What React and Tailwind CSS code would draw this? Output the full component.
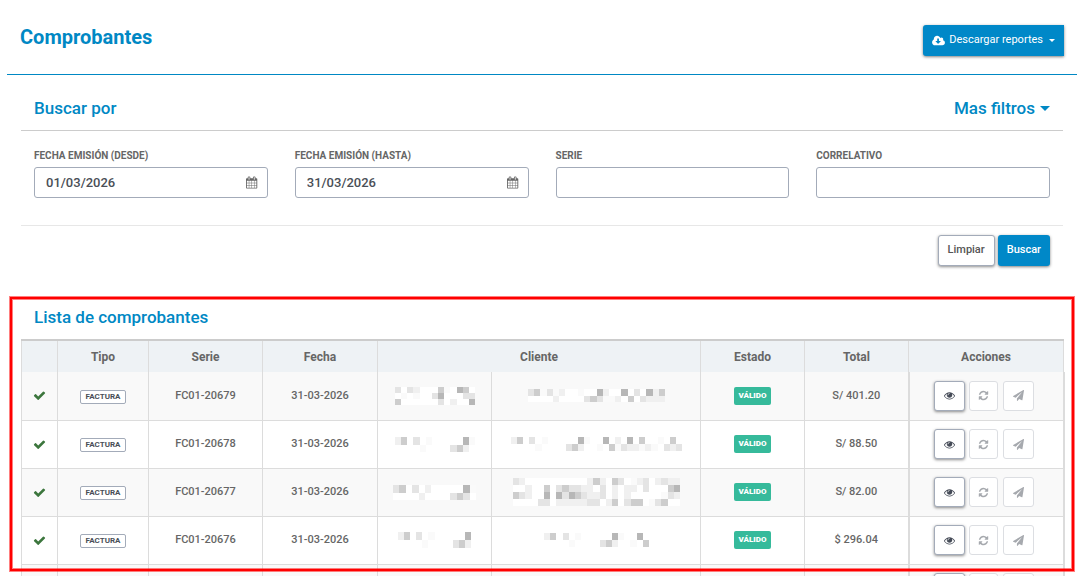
import React from 'react';

const iconPaths = {
  check:
    'M1671 566q0 40-28 68l-724 724-136 136q-28 28-68 28t-68-28l-136-136-362-362q-28-28-28-68t28-68l136-136q28-28 68-28t68 28l294 295 656-657q28-28 68-28t68 28l136 136q28 28 28 68z',
  eye: 'M1664 960q-152-236-381-353 61 104 61 225 0 185-131.5 316.5t-316.5 131.5-316.5-131.5-131.5-316.5q0-121 61-225-229 117-381 353 133 205 333.5 326.5t434.5 121.5 434.5-121.5 333.5-326.5zm-720-384q0-20-14-34t-34-14q-125 0-214.5 89.5t-89.5 214.5q0 20 14 34t34 14 34-14 14-34q0-86 61-147t147-61q20 0 34-14t14-34zm848 384q0 34-20 69-140 230-376.5 368.5t-499.5 138.5-499.5-139-376.5-368q-20-35-20-69t20-69q140-229 376.5-368t499.5-139 499.5 139 376.5 368q20 35 20 69z',
  refresh:
    'M1639 1056q0 5-1 7-64 268-268 434.5t-478 166.5q-146 0-282.5-55t-243.5-157l-129 129q-19 19-45 19t-45-19-19-45v-448q0-26 19-45t45-19h448q26 0 45 19t19 45-19 45l-137 137q71 66 161 102t187 36q134 0 250-65t186-179q11-17 53-117 8-23 30-23h192q13 0 22.5 9.5t9.5 22.5zm25-800v448q0 26-19 45t-45 19h-448q-26 0-45-19t-19-45 19-45l138-138q-148-137-349-137-134 0-250 65t-186 179q-11 17-53 117-8 23-30 23h-199q-13 0-22.5-9.5t-9.5-22.5v-7q65-268 270-434.5t480-166.5q146 0 284 55.5t245 156.5l130-129q19-19 45-19t45 19 19 45z',
  plane:
    'M1764 11q33 24 27 64l-256 1536q-5 29-32 45-14 8-31 8-11 0-24-5l-453-185-242 295q-18 23-49 23-13 0-22-4-19-7-30.5-23.5t-11.5-36.5v-349l864-1059-1069 925-395-162q-37-14-40-55-2-40 32-59l1664-960q15-9 32-9 20 0 36 11z',
  calendar:
    'M192 1664h288v-288h-288v288zm352 0h320v-288h-320v288zm-352-352h288v-320h-288v320zm352 0h320v-320h-320v320zm-352-384h288v-288h-288v288zm736 736h320v-288h-320v288zm-384-736h320v-288h-320v288zm768 736h288v-288h-288v288zm-384-352h320v-320h-320v320zm-352-864v-288q0-13-9.5-22.5t-22.5-9.5h-64q-13 0-22.5 9.5t-9.5 22.5v288q0 13 9.5 22.5t22.5 9.5h64q13 0 22.5-9.5t9.5-22.5zm736 864h288v-320h-288v320zm-384-384h320v-288h-320v288zm384 0h288v-288h-288v288zm32-480v-288q0-13-9.5-22.5t-22.5-9.5h-64q-13 0-22.5 9.5t-9.5 22.5v288q0 13 9.5 22.5t22.5 9.5h64q13 0 22.5-9.5t9.5-22.5zm384-64v1280q0 52-38 90t-90 38h-1408q-52 0-90-38t-38-90v-1280q0-52 38-90t90-38h128v-96q0-66 47-113t113-47h64q66 0 113 47t47 113v96h384v-96q0-66 47-113t113-47h64q66 0 113 47t47 113v96h128q52 0 90 38t38 90z',
  cloud:
    'M1216 928q0-14-9-23t-23-9h-224v-352q0-13-9.5-22.5t-22.5-9.5h-192q-13 0-22.5 9.5t-9.5 22.5v352h-224q-13 0-22.5 9.5t-9.5 22.5q0 14 9 23l352 352q9 9 23 9t23-9l351-351q10-12 10-24zm640 224q0 159-112.5 271.5t-271.5 112.5h-1088q-185 0-316.5-131.5t-131.5-316.5q0-130 70-240t188-165q-2-30-2-43 0-212 150-362t362-150q156 0 285.5 87t188.5 231q71-62 166-62 106 0 181 75t75 181q0 76-41 138 130 31 213.5 135.5t83.5 238.5z',
};

const viewBoxes = {
  cloud: '-64 0 1920 1792',
  calendar: '64 0 1920 1792',
};

const Icon = ({ name, className }) => (
  <svg viewBox={viewBoxes[name] || '0 0 1792 1792'} fill="currentColor" aria-hidden="true" className={className}>
    <path d={iconPaths[name]} />
  </svg>
);

const Caret = ({ className }) => (
  <svg viewBox="0 0 10 5" fill="currentColor" aria-hidden="true" className={className}>
    <path d="M0 0h10L5 5z" />
  </svg>
);

const shades = { w: '#ffffff', a: '#fafafa', b: '#f0f0f0', c: '#e4e4e4', d: '#cdcdcd', e: '#b7b7b7' };

// Pixelated block that hides client data, one letter per tile
const Mosaic = ({ width, height, rows }) => (
  <svg
    width={width}
    height={height}
    viewBox={`0 0 ${rows[0].length} ${rows.length}`}
    preserveAspectRatio="none"
    shapeRendering="crispEdges"
    aria-hidden="true"
    className="mx-auto block"
  >
    {rows.map((row, y) =>
      row.split('').map((tile, x) =>
        tile === '.' ? null : <rect key={`${x}-${y}`} x={x} y={y} width="1" height="1" fill={shades[tile]} />
      )
    )}
  </svg>
);

const comprobantes = [
  {
    serie: 'FC01-20679',
    fecha: '31-03-2026',
    total: 'S/ 401.20',
    documento: { width: 80, height: 18, rows: ['cwcbwwwdawedw', 'wawawwcewwwcc', 'dwwwwwwcwbwwe'] },
    nombre: { width: 137, height: 13, rows: ['cdacabwwawwebwwewcwebd', 'wwwwbwwwwcdcaabwdwcbbb'] },
  },
  {
    serie: 'FC01-20678',
    fecha: '31-03-2026',
    total: 'S/ 88.50',
    documento: { width: 80, height: 15, rows: ['bd.c.a.....ea', '....a....cdb.'] },
    nombre: {
      width: 171,
      height: 14,
      rows: ['bd.c.a.....ea..e.b.e.d..a.d.', '....a....cdb..a.dacbbaba.cbc'],
    },
  },
  {
    serie: 'FC01-20677',
    fecha: '31-03-2026',
    total: 'S/ 82.00',
    documento: { width: 83, height: 15, rows: ['cdwcwbwwwwwea', 'wwwwbwwwwcdcw'] },
    nombre: {
      width: 167,
      height: 28,
      rows: [
        'cbwwwwwwwwwwbdbwdcwabcwbcbb',
        'wwbwwdwcdccbbwcwbwbbwcwwwde',
        'dcbwwewecedcbbcwbwbwwwwwacb',
        'wwwwccwbbbbbccwbdwcddwacdww',
      ],
    },
  },
  {
    serie: 'FC01-20676',
    fecha: '31-03-2026',
    total: '$ 296.04',
    documento: { width: 73, height: 16, rows: ['bd.c.a.....e', '....a....cdb'] },
    nombre: { width: 105, height: 14, rows: ['bd.c.a.....ea..e.', '....a....cdb..a.d'] },
  },
];

const Field = ({ id, label, value, date }) => (
  <div>
    <label htmlFor={id} className="block text-[10px] leading-4 font-bold text-[#666666] uppercase">
      {label}
    </label>
    <div className="mt-[3px] flex h-[31px] items-center rounded-[3px] border border-[#a3abb9] bg-white pr-2">
      <input
        id={id}
        type="text"
        defaultValue={value}
        className="h-full w-full min-w-0 flex-1 bg-transparent pl-[11px] text-[13px] font-medium text-[#4a4f57] outline-none"
      />
      {date && (
        <button type="button" aria-label={`Abrir calendario: ${label}`} className="text-[#666666]">
          <Icon name="calendar" className="h-[13px] w-[13px]" />
        </button>
      )}
    </div>
  </div>
);

const Acciones = () => (
  <div className="flex items-center justify-center gap-1 pr-1">
    <button
      type="button"
      aria-label="Ver"
      className="flex h-[30px] w-[31px] items-center justify-center rounded-[3px] border border-[#a3abb9] bg-white text-[#454b57] shadow-[0_1px_3px_rgba(0,0,0,0.45)]"
    >
      <Icon name="eye" className="h-[11px] w-[11px]" />
    </button>
    <button
      type="button"
      aria-label="Actualizar"
      disabled
      className="flex h-[30px] w-[29px] items-center justify-center rounded-[3px] border border-[#dcdee2] bg-white text-[#a6a9ae]"
    >
      <Icon name="refresh" className="h-[11px] w-[11px]" />
    </button>
    <button
      type="button"
      aria-label="Enviar"
      disabled
      className="ml-px flex h-[30px] w-[31px] items-center justify-center rounded-[3px] border border-[#dcdee2] bg-white text-[#a6a9ae]"
    >
      <Icon name="plane" className="h-[11px] w-[11px]" />
    </button>
  </div>
);

const TablaComprobantes = () => (
  <table className="w-full table-fixed border-collapse text-center text-[11px] font-medium text-[#666666]">
    <colgroup>
      <col className="w-[36px]" />
      <col className="w-[91px]" />
      <col className="w-[114px]" />
      <col className="w-[115px]" />
      <col className="w-[114px]" />
      <col className="w-[209px]" />
      <col className="w-[104px]" />
      <col className="w-[104px]" />
      <col className="w-[155px]" />
    </colgroup>
    <thead>
      <tr className="h-8 border-t-2 border-[#cccccc] bg-[#eef2f5] text-xs [&>th]:border-x [&>th]:border-[#dcdcdc] [&>th]:p-0 [&>th]:font-bold">
        <th scope="col" aria-label="Verificado"></th>
        <th scope="col">Tipo</th>
        <th scope="col">Serie</th>
        <th scope="col">Fecha</th>
        <th scope="col" colSpan={2}>Cliente</th>
        <th scope="col">Estado</th>
        <th scope="col">Total</th>
        <th scope="col">Acciones</th>
      </tr>
    </thead>
    <tbody>
      {comprobantes.map((item) => (
        <tr
          key={item.serie}
          className="h-12 odd:bg-[#f9f9f9] [&>td]:border-x [&>td]:border-b [&>td]:border-[#dcdcdc] [&>td]:p-0 [&>td:last-child]:border-x-2"
        >
          <td>
            <Icon name="check" className="mx-auto h-[13px] w-[13px] text-[#3c763d]" />
          </td>
          <td>
            <span className="inline-block rounded-xs border border-[#a3abb9] bg-white px-[5px] text-[8px] leading-3 font-bold text-[#4a4f57]">
              FACTURA
            </span>
          </td>
          <td>{item.serie}</td>
          <td>{item.fecha}</td>
          <td>
            <Mosaic {...item.documento} />
          </td>
          <td>
            <Mosaic {...item.nombre} />
          </td>
          <td>
            <span className="inline-block rounded-xs bg-[#36ba9b] px-[5px] text-[8px] leading-[18px] font-black text-white">
              VÁLIDO
            </span>
          </td>
          <td>{item.total}</td>
          <td>
            <Acciones />
          </td>
        </tr>
      ))}
      <tr className="h-12 bg-[#f9f9f9] [&>td]:border-x [&>td]:border-[#dcdcdc] [&>td]:p-0 [&>td:last-child]:border-x-2">
        <td></td>
        <td></td>
        <td></td>
        <td></td>
        <td></td>
        <td></td>
        <td></td>
        <td></td>
        <td>
          <Acciones />
        </td>
      </tr>
    </tbody>
  </table>
);

const App = () => {
  return (
    <div className="h-screen overflow-hidden bg-white font-['Roboto',sans-serif]">
      <header className="mx-[7px] flex h-[75px] items-start justify-between border-b border-[#0088c4] px-[13px] pt-[25px]">
        <h1 className="text-xl leading-6 font-bold text-[#0088c4]">Comprobantes</h1>
        <button
          type="button"
          className="flex h-[31px] items-center rounded-l-[3px] bg-[#0088c8] px-[9px] text-[11px] text-white shadow-[0_1px_3px_rgba(0,0,0,0.5)]"
        >
          <Icon name="cloud" className="mr-1 h-3 w-[13px]" />
          Descargar reportes
          <Caret className="ml-1.5 h-[3px] w-1.5" />
        </button>
      </header>

      <section className="mx-[21px]">
        <div className="flex h-14 items-center justify-between border-b border-[#cccccc] px-[13px] pt-3 text-[17px] font-medium text-[#0088c4]">
          <h2>Buscar por</h2>
          <button type="button" className="flex items-center gap-[5px]">
            Mas filtros
            <Caret className="h-[5px] w-2.5" />
          </button>
        </div>
        <div className="grid grid-cols-4 gap-[27px] px-[13px] pt-[17px] pb-[27px]">
          <Field id="desde" label="Fecha emisión (desde)" value="01/03/2026" date />
          <Field id="hasta" label="Fecha emisión (hasta)" value="31/03/2026" date />
          <Field id="serie" label="Serie" />
          <Field id="correlativo" label="Correlativo" />
        </div>
        <div className="flex justify-end gap-[3px] border-t border-[#e7e7e7] px-[13px] pt-[9px] text-[11px] font-medium">
          <button
            type="button"
            className="h-[31px] rounded-[3px] border border-[#a3abb9] bg-white px-[9px] text-[#555555] shadow-[0_1px_3px_rgba(0,0,0,0.45)]"
          >
            Limpiar
          </button>
          <button
            type="button"
            className="h-[31px] rounded-[3px] bg-[#0088c8] px-[9px] text-white shadow-[0_1px_3px_rgba(0,0,0,0.5)]"
          >
            Buscar
          </button>
        </div>
      </section>

      <section className="relative mt-[30px] px-[21px]">
        <h2 className="flex h-[43px] items-center px-[13px] text-[17px] font-medium text-[#0088c4]">
          Lista de comprobantes
        </h2>
        <TablaComprobantes />
        {/* Highlight frame over the list */}
        <div className="pointer-events-none absolute top-px right-[10px] left-[10px] h-[274px] border-2 border-[#ff0000] shadow-[0_0_0_1px_rgba(255,0,0,0.5),inset_0_0_0_1px_rgba(255,0,0,0.5)]"></div>
      </section>
    </div>
  );
};

export default App;
